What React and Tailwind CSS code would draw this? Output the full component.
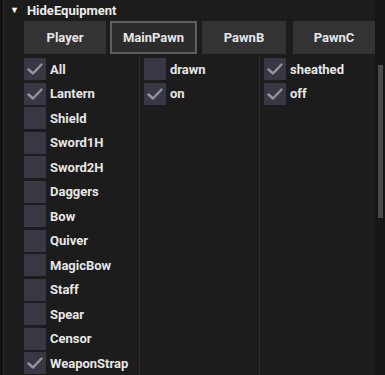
import React from "react";

function Check({ checked }) {
  return (
    <div className="w-[22px] h-[22px] bg-[#383844] flex items-center justify-center shrink-0">
      {checked && (
        <svg width="18" height="18" viewBox="0 0 18 18">
          <path d="M2.5 9.5 L7 13.5 L15.5 4.5" fill="none" stroke="#9494a0" strokeWidth="2.4" strokeLinecap="round" strokeLinejoin="round" />
        </svg>
      )}
    </div>
  );
}

function Item({ label, checked }) {
  return (
    <div className="flex items-center h-[22px] gap-[4px]">
      <Check checked={checked} />
      <span className="text-[13px] font-bold text-[#e6e6e6] leading-none">{label}</span>
    </div>
  );
}

const col1 = [
  ["All", true], ["Lantern", true], ["Shield", false], ["Sword1H", false], ["Sword2H", false],
  ["Daggers", false], ["Bow", false], ["Quiver", false], ["MagicBow", false], ["Staff", false],
  ["Spear", false], ["Censor", false], ["WeaponStrap", true],
];
const col2 = [["drawn", false], ["on", true]];
const col3 = [["sheathed", true], ["off", true]];

function Btn({ label, active }) {
  return (
    <div
      className={
        "h-[33px] flex items-center justify-center text-[13px] font-bold text-[#e6e6e6] " +
        (active ? "bg-[#2c2c2c] border-2 border-[#5e5e5e]" : "bg-[#333333]")
      }
    >
      {label}
    </div>
  );
}

export default function App() {
  return (
    <div
      className="w-[385px] h-[375px] bg-[#1c1c1c] flex overflow-hidden"
      style={{ fontFamily: "Roboto, 'Noto Sans', sans-serif" }}
    >
      <div className="w-[3px] bg-[#111111]" />
      <div className="w-px bg-[#2a2a2a]" />
      <div className="flex-1 flex flex-col">
        <div className="h-[21px] flex items-center pl-[6px] gap-[8px]">
          <span className="text-[9px] text-white leading-none">▼</span>
          <span className="text-[13px] font-bold text-[#ececec] leading-none">HideEquipment</span>
        </div>
        <div className="flex pl-[20px] h-[33px]">
          <div className="w-[82px]"><Btn label="Player" /></div>
          <div className="w-[87px] ml-[4px]"><Btn label="MainPawn" active /></div>
          <div className="w-[84px] ml-[5px]"><Btn label="PawnB" /></div>
          <div className="w-[82px] ml-[7px]"><Btn label="PawnC" /></div>
        </div>
        <div className="flex pl-[20px] mt-[2px] flex-1">
          <div className="w-[115px] flex flex-col gap-[2.5px] pt-[2px]">
            {col1.map(([l, c]) => <Item key={l} label={l} checked={c} />)}
          </div>
          <div className="w-px bg-[#2e2e2e]" />
          <div className="w-[119px] pl-[4px] flex flex-col gap-[2.5px] pt-[2px]">
            {col2.map(([l, c]) => <Item key={l} label={l} checked={c} />)}
          </div>
          <div className="w-px bg-[#2e2e2e]" />
          <div className="flex-1 pl-[4px] flex flex-col gap-[2.5px] pt-[2px]">
            {col3.map(([l, c]) => <Item key={l} label={l} checked={c} />)}
          </div>
        </div>
      </div>
      <div className="w-[10px] bg-[#161616] pt-[65px] pl-[3px]">
        <div className="w-[5px] h-[153px] bg-[#4a4a4a]" />
      </div>
    </div>
  );
}
